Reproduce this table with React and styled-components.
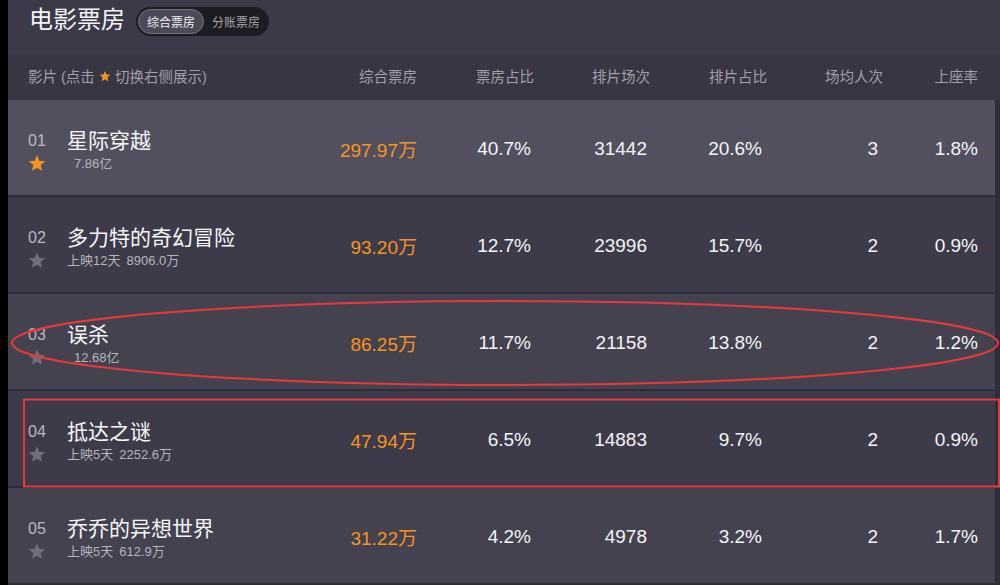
import styled, { createGlobalStyle } from 'styled-components';

const GlobalStyle = createGlobalStyle`
  html, body {
    margin: 0;
    padding: 0;
    background: #000;
  }
  body {
    font-family: "Liberation Sans", "Noto Sans CJK SC", sans-serif;
  }
`;

const Page = styled.div`
  position: relative;
  margin-left: 8px;
  width: 992px;
  height: 585px;
  overflow: hidden;
  background: #2f2d39;
`;

const TitleBar = styled.div`
  display: flex;
  align-items: flex-start;
  height: 55px;
  box-sizing: border-box;
  padding: 5px 0 0 21px;
  background: #3c3a48;
`;

const Title = styled.h1`
  margin: 0;
  font-size: 24px;
  line-height: 30px;
  font-weight: 400;
  color: #f4f4f6;
`;

const Toggle = styled.div`
  display: flex;
  align-items: center;
  margin: 2px 0 0 11px;
  height: 29px;
  box-sizing: border-box;
  padding: 0 9px 0 2px;
  border-radius: 15px;
  background: #1d1c23;
`;

const ToggleItem = styled.span`
  display: flex;
  align-items: center;
  height: 25px;
  box-sizing: border-box;
  padding: ${(p) => (p.$active ? '0 8px' : '0 0 0 8px')};
  border-radius: 13px;
  font-size: 12px;
  color: ${(p) => (p.$active ? '#f0f0f2' : '#a4a3ab')};
  background: ${(p) => (p.$active ? '#4c4a59' : 'transparent')};
  border: ${(p) => (p.$active ? '1px solid #75737f' : 'none')};
`;

const cols = '1fr 120px 117px 116px 117px 116px 95px';

const HeaderRow = styled.div`
  display: grid;
  grid-template-columns: ${cols};
  align-items: center;
  height: 45px;
  box-sizing: border-box;
  padding: 0 22px 4px 20px;
  background: #383643;
  font-size: 14.5px;
  color: #a19fa9;
`;

const HeadCell = styled.div`
  display: flex;
  align-items: center;
  justify-content: ${(p) => (p.$left ? 'flex-start' : 'flex-end')};
  white-space: nowrap;
`;

const List = styled.div`
  display: flex;
  flex-direction: column;
  gap: 2px;
  padding-right: 5px;
`;

const Row = styled.div`
  display: grid;
  grid-template-columns: ${cols};
  align-items: center;
  height: 95px;
  box-sizing: border-box;
  padding: 0 17px 0 20px;
  background: ${(p) => p.$bg};
`;

const MovieCell = styled.div`
  display: flex;
  align-items: flex-start;
  padding-top: 6px;
`;

const RankBox = styled.div`
  display: flex;
  flex-direction: column;
  width: 39px;
  padding-top: 2px;
`;

const Rank = styled.span`
  font-size: 16px;
  line-height: 20px;
  color: #b9b8c0;
`;

const StarWrap = styled.span`
  display: flex;
  margin-top: 3px;
`;

const NameBox = styled.div`
  display: flex;
  flex-direction: column;
`;

const Name = styled.span`
  font-size: 21px;
  line-height: 24px;
  color: #f6f6f8;
  white-space: nowrap;
`;

const Sub = styled.span`
  margin-top: 2px;
  padding-left: ${(p) => (p.$indent ? '7px' : '0')};
  font-size: 13px;
  line-height: 18px;
  color: #b6b5bd;
  white-space: nowrap;
`;

const Gross = styled.span`
  margin-left: 6px;
`;

const Value = styled.div`
  text-align: right;
  padding-right: ${(p) => p.$pad || 0}px;
  padding-top: 2px;
  font-size: 19px;
  color: ${(p) => (p.$accent ? '#f7941d' : '#f4f4f6')};
  white-space: nowrap;
`;

const Overlay = styled.svg`
  position: absolute;
  left: -8px;
  top: 0;
  width: 1000px;
  height: 585px;
  pointer-events: none;
`;

const Star = ({ size = 18, color }) => (
  <svg width={size} height={size} viewBox="0 0 24 24">
    <path
      d="M12 1.8l3.1 7.1 7.7.7-5.8 5.1 1.7 7.6L12 18.3l-6.7 4 1.7-7.6-5.8-5.1 7.7-.7z"
      fill={color}
    />
  </svg>
);

const headers = ['综合票房', '票房占比', '排片场次', '排片占比', '场均人次', '上座率'];
const pads = [0, 3, 3, 5, 5, 0];

const movies = [
  { rank: '01', name: '星际穿越', sub: '7.86亿', indent: true, values: ['297.97万', '40.7%', '31442', '20.6%', '3', '1.8%'], bg: '#52505f', starred: true },
  { rank: '02', name: '多力特的奇幻冒险', days: '上映12天', gross: '8906.0万', values: ['93.20万', '12.7%', '23996', '15.7%', '2', '0.9%'], bg: '#3d3b49' },
  { rank: '03', name: '误杀', sub: '12.68亿', indent: true, values: ['86.25万', '11.7%', '21158', '13.8%', '2', '1.2%'], bg: '#44424f' },
  { rank: '04', name: '抵达之谜', days: '上映5天', gross: '2252.6万', values: ['47.94万', '6.5%', '14883', '9.7%', '2', '0.9%'], bg: '#3d3b49' },
  { rank: '05', name: '乔乔的异想世界', days: '上映5天', gross: '612.9万', values: ['31.22万', '4.2%', '4978', '3.2%', '2', '1.7%'], bg: '#44424f' },
];

export default function App() {
  return (
    <>
      <GlobalStyle />
      <Page>
        <TitleBar>
          <Title>电影票房</Title>
          <Toggle>
            <ToggleItem $active>综合票房</ToggleItem>
            <ToggleItem>分账票房</ToggleItem>
          </Toggle>
        </TitleBar>

        <HeaderRow>
          <HeadCell $left>
            影片 (点击&nbsp;<Star size={12} color="#f7941d" />&nbsp;切换右侧展示)
          </HeadCell>
          {headers.map((h) => (
            <HeadCell key={h}>{h}</HeadCell>
          ))}
        </HeaderRow>

        <List>
          {movies.map((m) => (
            <Row key={m.rank} $bg={m.bg}>
              <MovieCell>
                <RankBox>
                  <Rank>{m.rank}</Rank>
                  <StarWrap>
                    <Star color={m.starred ? '#f7941d' : '#706e7c'} />
                  </StarWrap>
                </RankBox>
                <NameBox>
                  <Name>{m.name}</Name>
                  {m.sub ? (
                    <Sub $indent={m.indent}>{m.sub}</Sub>
                  ) : (
                    <Sub>
                      {m.days}
                      <Gross>{m.gross}</Gross>
                    </Sub>
                  )}
                </NameBox>
              </MovieCell>
              {m.values.map((v, i) => (
                <Value key={i} $accent={i === 0} $pad={pads[i]}>
                  {v}
                </Value>
              ))}
            </Row>
          ))}
        </List>

        <Overlay viewBox="0 0 1000 585">
          <ellipse cx="505" cy="343" rx="493" ry="42" fill="none" stroke="#e8393a" strokeWidth="2" />
          <rect x="24" y="399.5" width="975" height="87" fill="none" stroke="#e8393a" strokeWidth="2" />
        </Overlay>
      </Page>
    </>
  );
}
